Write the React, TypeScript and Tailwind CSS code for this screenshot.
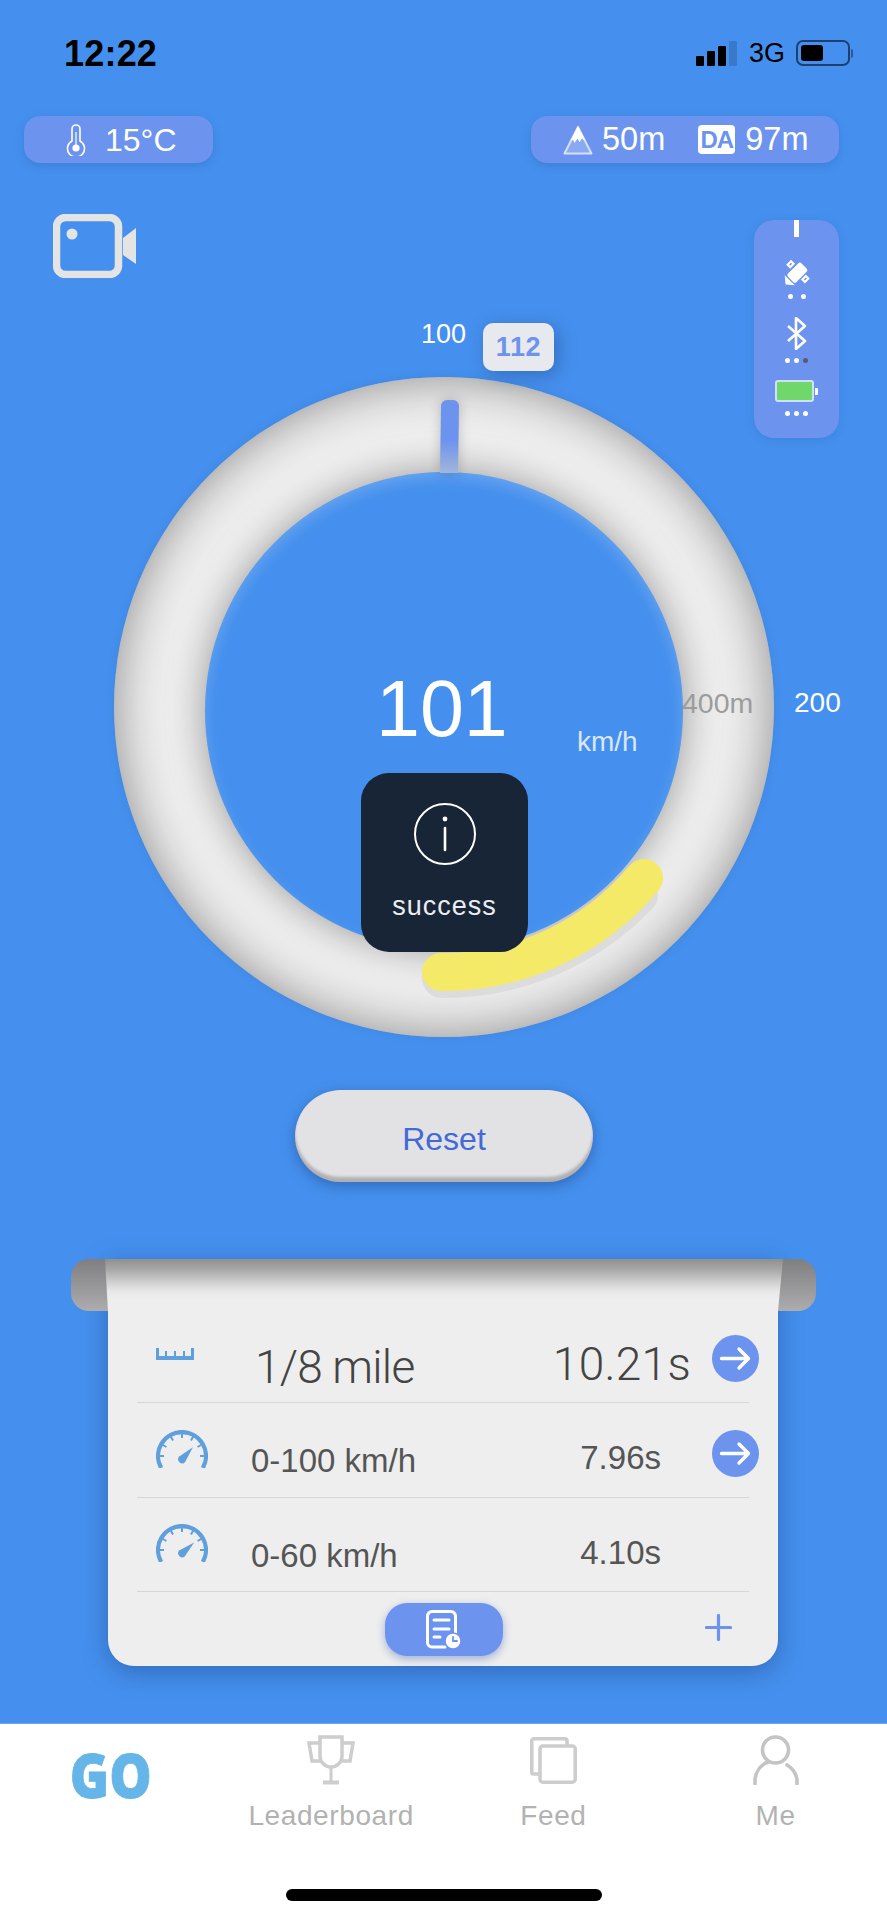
import React from "react";

const sans = "font-['Liberation_Sans',Arial,sans-serif]";

function Gauge({ rot }: { rot: number }) {
  const ticks = [-90, -60, -30, 0, 30, 60, 90];
  return (
    <svg width="52" height="38" viewBox="0 0 52 38" fill="none" className="block">
      <path d="M5.2 38 A24 24 0 1 1 46.8 38" stroke="#5f9fdc" strokeWidth="4.2" />
      {ticks.map((t) => (
        <line key={t} x1="26" y1="3" x2="26" y2="8" stroke="#5f9fdc" strokeWidth="2" transform={`rotate(${t} 26 26)`} />
      ))}
      <g transform={`rotate(${rot} 25.5 30)`}>
        <path d="M25.5 13 L29.5 29 A4 4 0 1 1 21.5 29 Z" fill="#5f9fdc" />
      </g>
    </svg>
  );
}

function Dots({ n = 3, dark = false, mt }: { n?: number; dark?: boolean; mt: string }) {
  return (
    <div className={`flex ${n === 2 ? "gap-[8px]" : "gap-[4px]"} ${mt}`}>
      {Array.from({ length: n }).map((_, i) => (
        <div key={i} className={`w-[5px] h-[5px] rounded-full ${dark && i === 2 ? "bg-[#555c70]" : "bg-white"}`} />
      ))}
    </div>
  );
}

function Arrow() {
  return (
    <div className="w-[47px] h-[47px] rounded-full bg-[#6c93ee] flex items-center justify-center">
      <svg width="47" height="47" viewBox="0 0 47 47" fill="none" stroke="white" strokeWidth="3.4" strokeLinecap="round" strokeLinejoin="round">
        <path d="M9.5 23.5 H36 M27 14 L36.5 23.5 L27 33" />
      </svg>
    </div>
  );
}

export default function App() {
  return (
    <div className={`w-[887px] h-[1920px] bg-[#4590ee] flex flex-col overflow-hidden relative ${sans}`}>
      {/* status bar */}
      <div className="h-[116px] flex justify-between items-start pt-[35px] pl-[64px] pr-[34px]">
        <div className="text-[36px] leading-[38px] font-bold text-black tracking-[0.2px]">12:22</div>
        <div className="flex items-center mt-[5px]">
          <div className="flex items-end gap-[3.5px] h-[26px]">
            <div className="w-[7.5px] h-[10px] bg-black rounded-[1px]" />
            <div className="w-[7.5px] h-[15px] bg-black rounded-[1px]" />
            <div className="w-[7.5px] h-[20px] bg-black rounded-[1px]" />
            <div className="w-[7.5px] h-[25px] bg-[#3a78c8] rounded-[1px]" />
          </div>
          <div className="text-[27px] leading-[26px] text-black ml-[12px]">3G</div>
          <div className="ml-[11px] flex items-center">
            <div className="w-[54px] h-[26px] rounded-[7px] border-2 border-[#1f3f6e] p-[3px]">
              <div className="w-[22px] h-full bg-black rounded-[3px]" />
            </div>
            <div className="w-[2px] h-[9px] bg-[#2a5a9a] rounded-r-[2px] ml-[1px]" />
          </div>
        </div>
      </div>

      {/* pills */}
      <div className="flex justify-between pl-[24px] pr-[48px]">
        <div className="w-[189px] h-[47px] rounded-[16px] bg-[#6c93ee] shadow-[0_3px_8px_rgba(40,80,150,0.25)] flex items-center pl-[42px] text-white text-[32px] leading-[47px]">
          <svg width="20" height="32" viewBox="0 0 20 32" fill="none" stroke="white" strokeWidth="1.6" className="mr-[19px] shrink-0">
            <path d="M6 5 A4 4 0 0 1 14 5 V17 A8.5 8.5 0 1 1 6 17 Z" />
            <circle cx="10" cy="24" r="3.6" fill="white" stroke="none" />
            <line x1="10" y1="8" x2="10" y2="22" strokeWidth="1.2" />
          </svg>
          <span className="pt-[2px]">15°C</span>
        </div>
        <div className="w-[308px] h-[47px] rounded-[16px] bg-[#6c93ee] shadow-[0_3px_8px_rgba(40,80,150,0.25)] flex items-center pl-[32px] text-white text-[32.5px] leading-[47px]">
          <svg width="30" height="30" viewBox="0 0 30 30" className="mr-[9px] shrink-0">
            <path d="M15 2 L28.5 28.5 H1.5 Z" fill="#89a9f2" stroke="#d5e0fa" strokeWidth="2" strokeLinejoin="round" />
            <path d="M15 1 L22.5 16 L19 13.5 L16.5 17 L14.5 13.5 L11.5 18 L10 14.5 L7.5 16 Z" fill="white" />
          </svg>
          <span>50m</span>
          <div className="w-[37px] h-[29px] bg-white rounded-[4px] ml-[33px] text-[#6c93ee] font-bold text-[24px] leading-[29px] text-center tracking-[-1px]">DA</div>
          <span className="ml-[10px]">97m</span>
        </div>
      </div>

      {/* camera + status panel */}
      <div className="flex justify-between items-start h-[163px] pl-[53px] pr-[48px] mt-[51px]">
        <svg width="84" height="64" viewBox="0 0 84 64" fill="none" className="shrink-0">
          <rect x="3.5" y="3.5" width="62" height="57" rx="9" stroke="#e4e4e4" strokeWidth="7.5" />
          <ellipse cx="19" cy="20" rx="5.5" ry="5.5" fill="#e4e4e4" />
          <path d="M70 24 L83 14 V50 L70 41 Z" fill="#e4e4e4" />
        </svg>
        <div className="relative z-10 mt-[6px] w-[85px] h-[218px] shrink-0 rounded-[20px] bg-[#6c93ee] shadow-[0_2px_10px_rgba(40,80,150,0.2)] flex flex-col items-center">
          <div className="w-[5px] h-[17px] bg-white" />
          <svg width="31" height="31" viewBox="0 0 26 26" className="mt-[21px] -ml-[1px]">
            <g transform="rotate(45 13 13)" fill="none">
              <rect x="8" y="4" width="10" height="16" rx="2" fill="white" />
              <path d="M2.5 9 H5.5 V13 H2.5 Z M20 9 H23 V13 H20 Z" stroke="white" strokeWidth="1.8" />
              <path d="M7 21 H19 L13 26 Z" fill="white" />
            </g>
          </svg>
          <Dots n={2} mt="mt-[5px]" />
          <svg width="22" height="33" viewBox="0 0 22 33" fill="none" stroke="white" strokeWidth="2.6" strokeLinejoin="round" className="mt-[18px]">
            <path d="M2 9 L19 24 L10 32 V1 L19 9 L2 24" />
          </svg>
          <Dots dark mt="mt-[8px]" />
          <div className="flex items-center mt-[17px]">
            <div className="w-[39px] h-[22px] rounded-[3px] border-2 border-[#cfe0f7] bg-[#70d86a]" />
            <div className="w-[3px] h-[7px] bg-white rounded-r-[1px] ml-[1px]" />
          </div>
          <Dots mt="mt-[9px]" />
        </div>
      </div>

      {/* dial */}
      <div className="relative w-[660px] h-[660px] ml-[114px] rounded-full bg-[#eeeeee] shadow-[inset_0_0_50px_rgba(0,0,0,0.42),0_0_10px_rgba(30,60,120,0.12)] shrink-0">
        {/* inner circle */}
        <div className="absolute left-[91px] top-[95px] w-[478px] h-[478px] rounded-full bg-[#4590ee] shadow-[0_0_38px_rgba(0,0,0,0.36),inset_0_6px_14px_rgba(255,255,255,0.18)]" />
        {/* needle */}
        <svg width="20" height="76" viewBox="0 0 20 76" className="absolute left-[326px] top-[21px] drop-shadow-[0_0_6px_rgba(0,0,0,0.2)]">
          <defs>
            <linearGradient id="needle" x1="0" y1="0" x2="0" y2="1">
              <stop offset="0.55" stopColor="#6c93ee" />
              <stop offset="1" stopColor="#a3b5d8" />
            </linearGradient>
          </defs>
          <path d="M1 8 A6 6 0 0 1 7 2 H13 A6 6 0 0 1 19 8 L18 75 H0 Z" fill="url(#needle)" />
        </svg>
        {/* arc */}
        <svg width="660" height="660" viewBox="0 0 660 660" fill="none" className="absolute left-0 top-0">
          <path d="M328 601 A270 270 0 0 0 524 518" stroke="#dcdcdc" strokeWidth="40" strokeLinecap="round" />
          <path d="M327 595 A262 262 0 0 0 530 501" stroke="#f5e968" strokeWidth="38" strokeLinecap="round" />
        </svg>
        {/* labels */}
        <div className="absolute left-[307px] -top-[58px] text-[27px] leading-[30px] text-white">100</div>
        <div className="absolute left-[369px] -top-[54px] w-[71px] h-[48px] rounded-[10px] bg-[#e8e9ee] shadow-[4px_4px_18px_rgba(30,60,120,0.4)] flex items-center justify-center text-[27px] font-bold text-[#6c93ee] tracking-[0.6px]">112</div>
        <div className="absolute left-[262px] top-[287px] text-[79px] leading-[90px] text-white">101</div>
        <div className="absolute left-[463px] top-[350px] text-[28px] leading-[30px] text-[#dbe6f7]">km/h</div>
        <div className="absolute left-[568px] top-[311px] text-[28.5px] leading-[30px] text-[#9c9c9c]">400m</div>
        <div className="absolute left-[680px] top-[311px] text-[28px] leading-[30px] text-white">200</div>
        {/* toast */}
        <div className="absolute left-[247px] top-[396px] w-[167px] h-[179px] rounded-[28px] bg-[#172536] flex flex-col items-center text-white">
          <svg width="64" height="64" viewBox="0 0 64 64" fill="none" className="mt-[29px]">
            <circle cx="32" cy="32" r="30" stroke="white" strokeWidth="2" />
            <circle cx="32" cy="17" r="2.4" fill="white" />
            <line x1="32" y1="26" x2="32" y2="48" stroke="white" strokeWidth="2.6" strokeLinecap="round" />
          </svg>
          <div className="text-[27px] leading-[30px] mt-[25px] tracking-[1px] text-[#e9edf2]">success</div>
        </div>
      </div>

      {/* reset */}
      <div className="flex pl-[295px] mt-[53px]">
        <div className="w-[298px] h-[92px] pt-[6px] rounded-full bg-[#e2e2e4] shadow-[inset_0_-5px_3px_rgba(0,0,0,0.22),0_4px_14px_rgba(20,50,110,0.4)] flex items-center justify-center text-[32px] text-[#4169d8]">Reset</div>
      </div>

      {/* scroll card */}
      <div className="relative w-[745px] h-[407px] ml-[71px] mt-[77px] shrink-0">
        <div className="relative w-[670px] h-[407px] ml-[37px] rounded-b-[26px] bg-[#eeeeee] shadow-[0_6px_26px_rgba(20,50,110,0.4)] text-[#555555] text-[33px]">
          <div className="absolute -left-[37px] top-0 w-[745px] h-[52px] rounded-[18px] bg-gradient-to-b from-[#7f7f82] to-[#adadb0]" />
          <div className="absolute -left-[3px] top-0 w-[678px] h-[52px] bg-[linear-gradient(to_bottom,#8f8f8f_0px,#a9a9a9_11px,#cfcfcf_23px,#e8e8e8_33px,#eeeeee_40px)] [clip-path:polygon(0_0,100%_0,calc(100%-5px)_100%,3px_100%)]" />
          <div className="relative px-[29px] flex flex-col">
            {/* row 1 */}
            <div className="h-[144px] flex border-b border-[#d6d6d6]">
              <div className="w-[118px] pt-[89px] pl-[19px] shrink-0">
                <svg width="38" height="12" viewBox="0 0 38 12" fill="#5f9fdc" className="block">
                  <path d="M0 0 H3 V8 H9 V3 H11 V8 H18 V3 H20 V8 H27 V3 H29 V8 H35 V0 H38 V12 H0 Z" />
                </svg>
              </div>
              <div className="pt-[85px] font-['Roboto',sans-serif] font-light text-[46px] leading-[46px] text-[#444444] tracking-[-0.8px]">1/8 mile</div>
              <div className="ml-auto pt-[82px] font-['Roboto',sans-serif] font-light text-[46px] leading-[46px] text-[#444444] tracking-[0.3px]">10.21s</div>
              <div className="pt-[76px] ml-[21px] -mr-[10px] shrink-0"><Arrow /></div>
            </div>
            {/* row 2 */}
            <div className="h-[95px] flex border-b border-[#d6d6d6]">
              <div className="w-[114px] pt-[27px] pl-[19px] shrink-0"><Gauge rot={42} /></div>
              <div className="pt-[41px] leading-[33px]">0-100 km/h</div>
              <div className="ml-auto pt-[38px] leading-[33px]">7.96s</div>
              <div className="pt-[27px] ml-[51px] -mr-[10px] shrink-0"><Arrow /></div>
            </div>
            {/* row 3 */}
            <div className="h-[94px] flex border-b border-[#d6d6d6]">
              <div className="w-[114px] pt-[26px] pl-[19px] shrink-0"><Gauge rot={48} /></div>
              <div className="pt-[41px] leading-[33px]">0-60 km/h</div>
              <div className="ml-auto pt-[38px] mr-[88px] leading-[33px]">4.10s</div>
            </div>
            {/* row 4 */}
            <div className="flex pt-[11px] pl-[248px]">
              <div className="w-[118px] h-[53px] rounded-[22px] bg-[#6c93ee] shadow-[0_3px_8px_rgba(40,80,170,0.4)] flex items-center justify-center">
                <svg width="36" height="40" viewBox="0 0 36 40" fill="none" stroke="white" strokeWidth="3" strokeLinecap="round">
                  <path d="M19 37 H6 A4.5 4.5 0 0 1 1.5 32.5 V6 A4.5 4.5 0 0 1 6 1.5 H25 A4.5 4.5 0 0 1 29.5 6 V24" />
                  <path d="M8 10 H23 M8 19 H23 M8 27 H14" />
                  <circle cx="27" cy="31" r="8" fill="white" stroke="#6c93ee" strokeWidth="1.5" />
                  <path d="M27 27 V31 H31" stroke="#6c93ee" strokeWidth="1.8" />
                </svg>
              </div>
              <svg width="27" height="27" viewBox="0 0 27 27" className="ml-[202px] mt-[11px]" stroke="#6c93ee" strokeWidth="3.2" strokeLinecap="round">
                <path d="M13.5 1.5 V25.5 M1.5 13.5 H25.5" />
              </svg>
            </div>
          </div>
        </div>
      </div>

      <div className="flex-1" />

      {/* tab bar */}
      <div className="h-[197px] bg-white shrink-0 border-t border-[#6fa8ef] relative">
        <div className="grid grid-cols-4 h-[110px] text-[28px] text-[#b2b2b2] tracking-[0.6px]">
          <div className="flex justify-center">
            <div className="font-['Open_Sans',sans-serif] font-extrabold text-[#66b5e8] text-[62px] leading-[62px] mt-[19px] scale-x-[0.86] tracking-normal [-webkit-text-stroke:0.8px_#66b5e8]">GO</div>
          </div>
          <div className="flex flex-col items-center -ml-[3px]">
            <svg width="48" height="50" viewBox="0 0 48 50" fill="none" stroke="#cdcdcd" strokeWidth="3.5" className="mt-[11px]">
              <path d="M13 2 H35 V21 A11 11 0 0 1 13 21 Z" />
              <path d="M13 8 H2 L5 26 H14 M35 8 H46 L43 26 H34" />
              <path d="M24 32 V47" strokeWidth="3" />
              <path d="M16 47.5 H32" strokeWidth="4" />
            </svg>
            <div className="leading-[28px] mt-[17px]">Leaderboard</div>
          </div>
          <div className="flex flex-col items-center -ml-[2px]">
            <svg width="47" height="47" viewBox="0 0 47 47" fill="none" stroke="#cdcdcd" strokeWidth="3.6" className="mt-[13px]">
              <path d="M37 8 V3.5 A2 2 0 0 0 35 1.8 H3.5 A2 2 0 0 0 1.8 3.5 V35 A2 2 0 0 0 3.5 37 H9" />
              <rect x="10" y="9" width="35.2" height="36.2" rx="3" />
            </svg>
            <div className="leading-[28px] mt-[18px]">Feed</div>
          </div>
          <div className="flex flex-col items-center -ml-[1px]">
            <svg width="46" height="50" viewBox="0 0 46 50" fill="none" stroke="#c4c4c4" strokeWidth="3.6" strokeLinecap="round" className="mt-[11px]">
              <circle cx="22.5" cy="15" r="13" />
              <path d="M2 49 V44 A21 21 0 0 1 15 27 M34 30 A21 21 0 0 1 44 44 V49" />
            </svg>
            <div className="leading-[28px] mt-[17px]">Me</div>
          </div>
        </div>
        <div className="absolute left-[286px] bottom-[19px] w-[316px] h-[12px] rounded-full bg-black" />
      </div>
    </div>
  );
}
